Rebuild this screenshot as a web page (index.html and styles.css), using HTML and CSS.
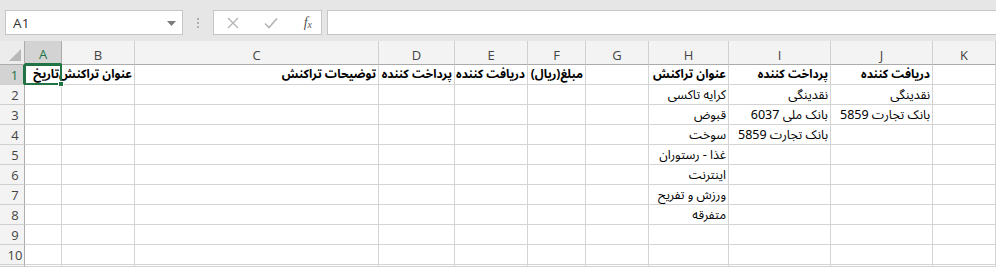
FILE: index.html
```html
<!DOCTYPE html>
<html lang="fa">
<head>
<meta charset="utf-8">
<title>Excel</title>
<link rel="stylesheet" href="styles.css">
</head>
<body>
<div class="toolbar">
  <div class="namebox">
    <span class="ref">A1</span>
    <svg class="caret" width="9" height="5" viewBox="0 0 9 5"><path d="M0 0H9L4.5 5Z" fill="#7a7a7a"/></svg>
  </div>
  <div class="grip"><i></i><i></i><i></i></div>
  <div class="fxbox">
    <svg width="12" height="12" viewBox="0 0 12 12"><path d="M1 1L11 11M11 1L1 11" stroke="#b4b4b4" stroke-width="1.4" fill="none"/></svg>
    <svg width="14" height="12" viewBox="0 0 14 12"><path d="M1 6.5L5 10.5L13 1.5" stroke="#b4b4b4" stroke-width="1.6" fill="none"/></svg>
    <span class="fx">f<sub>x</sub></span>
  </div>
  <div class="formula"></div>
</div>
<div class="sheet">
  <div class="corner"><svg width="12" height="12" viewBox="0 0 12 12"><path d="M12 0V12H0Z" fill="#b8b8b8"/></svg></div>
  <div class="ch sel">A</div><div class="ch">B</div><div class="ch">C</div><div class="ch">D</div><div class="ch">E</div><div class="ch">F</div><div class="ch">G</div><div class="ch">H</div><div class="ch">I</div><div class="ch">J</div><div class="ch">K</div>

  <div class="rh sel">1</div>
  <div class="c b active">تاریخ<span class="handle"></span></div><div class="c b">عنوان تراکنش</div><div class="c b">توضیحات تراکنش</div><div class="c b">پرداخت کننده</div><div class="c b">دریافت کننده</div><div class="c b">مبلغ(ریال)</div><div class="c"></div><div class="c b">عنوان تراکنش</div><div class="c b">پرداخت کننده</div><div class="c b">دریافت کننده</div><div class="c"></div>

  <div class="rh">2</div>
  <div class="c"></div><div class="c"></div><div class="c"></div><div class="c"></div><div class="c"></div><div class="c"></div><div class="c"></div><div class="c">کرایه تاکسی</div><div class="c">نقدینگی</div><div class="c">نقدینگی</div><div class="c"></div>

  <div class="rh">3</div>
  <div class="c"></div><div class="c"></div><div class="c"></div><div class="c"></div><div class="c"></div><div class="c"></div><div class="c"></div><div class="c">قبوض</div><div class="c">بانک ملی 6037</div><div class="c">بانک تجارت 5859</div><div class="c"></div>

  <div class="rh">4</div>
  <div class="c"></div><div class="c"></div><div class="c"></div><div class="c"></div><div class="c"></div><div class="c"></div><div class="c"></div><div class="c">سوخت</div><div class="c">بانک تجارت 5859</div><div class="c"></div><div class="c"></div>

  <div class="rh">5</div>
  <div class="c"></div><div class="c"></div><div class="c"></div><div class="c"></div><div class="c"></div><div class="c"></div><div class="c"></div><div class="c">غذا - رستوران</div><div class="c"></div><div class="c"></div><div class="c"></div>

  <div class="rh">6</div>
  <div class="c"></div><div class="c"></div><div class="c"></div><div class="c"></div><div class="c"></div><div class="c"></div><div class="c"></div><div class="c">اینترنت</div><div class="c"></div><div class="c"></div><div class="c"></div>

  <div class="rh">7</div>
  <div class="c"></div><div class="c"></div><div class="c"></div><div class="c"></div><div class="c"></div><div class="c"></div><div class="c"></div><div class="c">ورزش و تفریح</div><div class="c"></div><div class="c"></div><div class="c"></div>

  <div class="rh">8</div>
  <div class="c"></div><div class="c"></div><div class="c"></div><div class="c"></div><div class="c"></div><div class="c"></div><div class="c"></div><div class="c">متفرقه</div><div class="c"></div><div class="c"></div><div class="c"></div>

  <div class="rh">9</div>
  <div class="c"></div><div class="c"></div><div class="c"></div><div class="c"></div><div class="c"></div><div class="c"></div><div class="c"></div><div class="c"></div><div class="c"></div><div class="c"></div><div class="c"></div>

  <div class="rh">10</div>
  <div class="c"></div><div class="c"></div><div class="c"></div><div class="c"></div><div class="c"></div><div class="c"></div><div class="c"></div><div class="c"></div><div class="c"></div><div class="c"></div><div class="c"></div>

  <div class="rh"></div>
  <div class="c"></div><div class="c"></div><div class="c"></div><div class="c"></div><div class="c"></div><div class="c"></div><div class="c"></div><div class="c"></div><div class="c"></div><div class="c"></div><div class="c"></div>
</div>
</body>
</html>
```
FILE: styles.css
```css
* { box-sizing: border-box; }
html, body { margin: 0; padding: 0; }
body {
  width: 996px;
  height: 267px;
  overflow: hidden;
  background: #ffffff;
  font-family: "Open Sans", "Noto Sans", sans-serif;
}
.toolbar {
  height: 41px;
  background: #e6e6e6;
  display: flex;
  align-items: flex-start;
  padding: 10px 0 0 5px;
}
.namebox {
  width: 178px;
  height: 25px;
  background: #fff;
  border: 1px solid #c6c6c6;
  display: flex;
  align-items: center;
  justify-content: space-between;
  padding: 0 6px 0 7px;
}
.ref { font-size: 13.5px; color: #333; letter-spacing: 0.2px; }
.caret { margin-top: 1px; }
.grip {
  width: 30px;
  height: 25px;
  display: flex;
  flex-direction: column;
  align-items: center;
  justify-content: center;
  gap: 2px;
}
.grip i { width: 2px; height: 2px; background: #b0b0b0; display: block; }
.fxbox {
  width: 109px;
  height: 25px;
  background: #fff;
  border: 1px solid #c6c6c6;
  display: flex;
  align-items: center;
  justify-content: space-between;
  padding: 0 9px 0 13px;
}
.fx {
  font-family: "Liberation Serif", serif;
  font-style: italic;
  font-size: 14px;
  color: #555;
  line-height: 1;
}
.fx sub { font-size: 10px; vertical-align: -1px; }
.formula {
  margin-left: 5px;
  flex: 1;
  height: 25px;
  background: #fff;
  border: 1px solid #c6c6c6;
  border-right: none;
}
.sheet {
  display: grid;
  grid-template-columns: 25px 37px 73px 244px 76px 73px 58px 63px 80px 102px 102px 63px;
  grid-template-rows: 24px repeat(10, 20px) 2px;
}
.corner {
  background: #ececec;
  border-right: 1px solid #ababab;
  border-bottom: 1px solid #ababab;
  display: flex;
  align-items: flex-end;
  justify-content: flex-end;
  padding: 0 3px 3px 0;
}
.ch {
  background: #f3f3f3;
  border-right: 1px solid #d0d0d0;
  border-bottom: 1px solid #ababab;
  font-size: 13px;
  color: #444;
  display: flex;
  align-items: center;
  justify-content: center;
  padding-top: 4px;
}
.ch.sel {
  background: #d3d3d3;
  color: #217346;
  border-bottom: 2px solid #217346;
  border-right-color: #ababab;
}
.rh {
  background: #f3f3f3;
  border-right: 1px solid #ababab;
  border-bottom: 1px solid #d0d0d0;
  font-size: 13px;
  color: #444;
  display: flex;
  align-items: center;
  justify-content: center;
  padding-left: 6px;
}
.rh.sel {
  background: #d3d3d3;
  color: #217346;
  border-right: 2px solid #217346;
}
.c {
  position: relative;
  border-right: 1px solid #d4d4d4;
  border-bottom: 1px solid #d4d4d4;
  direction: rtl;
  text-align: right;
  white-space: nowrap;
  font-family: "Noto Sans Arabic", "DejaVu Sans Condensed", "DejaVu Sans", sans-serif;
  font-stretch: condensed;
  font-size: 12.5px;
  line-height: 18px;
  color: #000;
  padding: 1px 2px 0;
  overflow: visible;
}
.c.b { font-weight: bold; font-size: 12px; }
.c.active {
  border: 2px solid #217346;
  margin: -1px 0 0 -1px;
  line-height: 17px;
  padding: 0 1px;
  z-index: 2;
}
.handle {
  position: absolute;
  right: -4px;
  bottom: -4px;
  width: 6px;
  height: 6px;
  background: #217346;
  border: 1px solid #fff;
}
```
